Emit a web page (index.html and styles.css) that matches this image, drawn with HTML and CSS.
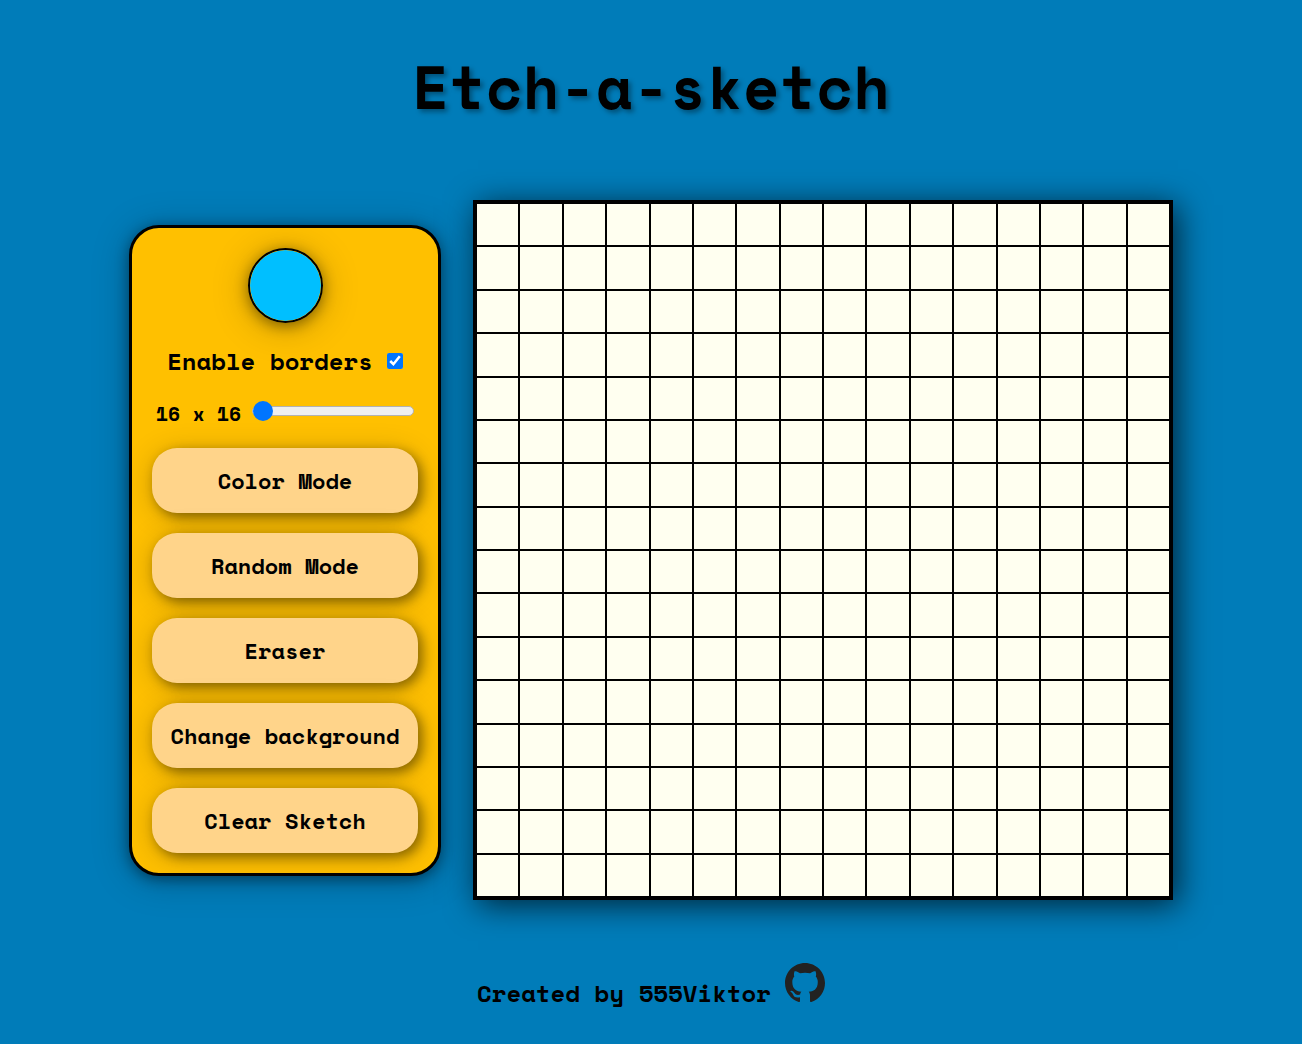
FILE: index.html
```html
<!DOCTYPE html>
<html lang="en">
<head>
  <meta charset="utf-8">
  <meta name="viewport" content="width=device-width, initial-scale=1">
  <title>Etch-a-sketch</title>
  <link rel="stylesheet" href="styles.css">
</head>
<body>
  <header class="header"><h1 class="title">Etch-a-sketch</h1></header>
  <main class="main">
    <section class="controls" aria-label="Controls">
      <input class="color-picker" type="color" value="#00bfff" aria-label="Pen color">
      <div class="option">
        <label for="borders">Enable borders</label>
        <input class="checkbox" type="checkbox" id="borders" checked>
      </div>
      <div class="option option-size">
        <label for="size">16 x 16</label>
        <input class="slider" type="range" id="size" min="16" max="64" value="16">
      </div>
      <button class="button" type="button">Color Mode</button>
      <button class="button" type="button">Random Mode</button>
      <button class="button" type="button">Eraser</button>
      <button class="button" type="button">Change background</button>
      <button class="button" type="button">Clear Sketch</button>
    </section>
    <div class="board" id="board"></div>
  </main>
  <footer class="footer">
    <span>Created by 555Viktor</span>
    <a class="github" href="https://github.com/555Viktor" aria-label="GitHub">
      <svg class="github-icon" viewBox="0 0 16 16" aria-hidden="true"><path fill-rule="evenodd" d="M8 0C3.58 0 0 3.58 0 8c0 3.54 2.29 6.53 5.47 7.59.4.07.55-.17.55-.38 0-.19-.01-.82-.01-1.49-2.01.37-2.53-.49-2.69-.94-.09-.23-.48-.94-.82-1.13-.28-.15-.68-.52-.01-.53.63-.01 1.08.58 1.23.82.72 1.21 1.87.87 2.33.66.07-.52.28-.87.51-1.07-1.78-.2-3.64-.89-3.64-3.95 0-.87.31-1.59.82-2.15-.08-.2-.36-1.02.08-2.12 0 0 .67-.21 2.2.82.64-.18 1.32-.27 2-.27s1.36.09 2 .27c1.53-1.04 2.2-.82 2.2-.82.44 1.1.16 1.92.08 2.12.51.56.82 1.27.82 2.15 0 3.07-1.87 3.75-3.65 3.95.29.25.54.73.54 1.48 0 1.07-.01 1.93-.01 2.2 0 .21.15.46.55.38A8.01 8.01 0 0 0 16 8c0-4.42-3.58-8-8-8z"/></svg>
    </a>
  </footer>
  <script src="script.js"></script>
</body>
</html>
```
FILE: styles.css
```css
* {
  box-sizing: border-box;
}

body {
  margin: 0;
  min-height: 100vh;
  display: flex;
  flex-direction: column;
  align-items: center;
  background: #007cb9;
  color: #000;
  font-family: "Space Mono", "DejaVu Sans Mono", monospace;
  font-weight: 700;
}

.header {
  padding: 43px 16px 69px;
}

.title {
  margin: 0;
  font-size: 60px;
  line-height: 88px;
  text-align: center;
  text-shadow: 3px 3px 5px rgba(0, 0, 0, 0.35);
}

.main {
  width: 100%;
  padding: 0 16px;
  display: flex;
  flex-wrap: wrap;
  justify-content: center;
  align-items: center;
  gap: 32px;
}

.controls {
  width: 312px;
  padding: 20px;
  display: flex;
  flex-direction: column;
  align-items: center;
  gap: 20px;
  background: #ffc000;
  border: 3px solid #000;
  border-radius: 30px;
  box-shadow: 0 3px 14px rgba(0, 0, 0, 0.4), 0 4px 36px rgba(0, 0, 0, 0.25);
}

.color-picker {
  appearance: none;
  width: 75px;
  height: 75px;
  padding: 0;
  overflow: hidden;
  background: none;
  border: 2px solid #000;
  border-radius: 50%;
  box-shadow: 0 3px 14px rgba(0, 0, 0, 0.4), 0 4px 36px rgba(0, 0, 0, 0.25);
  cursor: pointer;
}

.color-picker::-webkit-color-swatch-wrapper {
  padding: 0;
}

.color-picker::-webkit-color-swatch {
  border: none;
  border-radius: 50%;
}

.option {
  display: flex;
  align-items: center;
  gap: 14px;
  font-size: 24px;
  line-height: 36px;
}

.checkbox {
  width: 16px;
  height: 16px;
  margin: 0;
}

.option-size {
  align-items: flex-start;
  gap: 11px;
  font-size: 20px;
  line-height: 29px;
}

.slider {
  appearance: none;
  width: 162px;
  height: 20px;
  margin: 2px 0 0;
  background: none;
}

.slider::-webkit-slider-runnable-track {
  height: 10px;
  background: #efefef;
  border: 1px solid #b2b2b2;
  border-radius: 5px;
}

.slider::-webkit-slider-thumb {
  appearance: none;
  width: 20px;
  height: 20px;
  margin-top: -6px;
  background: #0075ff;
  border-radius: 50%;
}

.button {
  width: 100%;
  height: 65px;
  padding: 0;
  background: #ffd48a;
  border: none;
  border-radius: 25px;
  box-shadow: 4px 4px 12px rgba(0, 0, 0, 0.4), 0 4px 30px rgba(0, 0, 0, 0.2);
  color: #000;
  font: inherit;
  font-size: 22px;
  cursor: pointer;
}

.board {
  width: 700px;
  max-width: 100%;
  aspect-ratio: 1;
  display: grid;
  grid-template-columns: repeat(16, 1fr);
  grid-template-rows: repeat(16, 1fr);
  background: #fffff0;
  border: 3px solid #000;
  box-shadow: 5px 5px 30px rgba(0, 0, 0, 0.7);
}

.cell {
  border: 1px solid #000;
}

.footer {
  padding: 63px 16px 24px;
  display: flex;
  align-items: flex-end;
  gap: 14px;
  font-size: 24px;
  line-height: 36px;
}

.github {
  padding-bottom: 8px;
  line-height: 0;
}

.github-icon {
  width: 40px;
  height: 40px;
  fill: #222;
}
```
FILE: script.js
```js
const board = document.getElementById("board");

for (let i = 0; i < 16 * 16; i++) {
  const cell = document.createElement("div");
  cell.className = "cell";
  board.append(cell);
}
```
